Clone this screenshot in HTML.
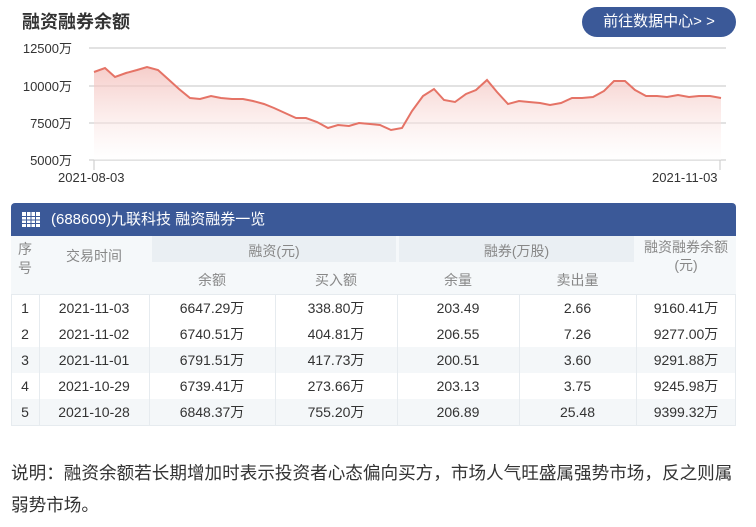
<!DOCTYPE html>
<html><head><meta charset="utf-8"><style>
*{margin:0;padding:0;box-sizing:border-box}
body{width:756px;height:527px;background:#fff;font-family:"Liberation Sans","Noto Sans CJK SC",sans-serif;position:relative;overflow:hidden;color:#333}
.a{position:absolute}
.h1{left:22px;top:8px;font-size:18px;font-weight:bold;color:#333}
.btn{left:582px;top:7px;width:154px;height:30px;border-radius:15px;background:#3b5998;color:#fff;font-size:15px;line-height:30px;text-align:center}
.tb{left:11px;top:203px;width:725px;height:33px;background:#3b5998;border-radius:4px 4px 0 0;color:#fff;font-size:15px;line-height:33px;padding-left:40px}
.c{position:absolute;text-align:center;font-size:13px}
.g{color:#888}
.r{display:flex;height:26px}
.r span{text-align:center}
</style></head><body>
<div class="a h1">融资融券余额</div>
<div class="a btn">前往数据中心&gt; &gt;</div>
<svg class="a" style="left:0;top:0" width="756" height="190">
<defs><linearGradient id="gr" x1="0" y1="0" x2="0" y2="1"><stop offset="0" stop-color="#f2b8b3" stop-opacity=".7"/><stop offset="1" stop-color="#fff" stop-opacity=".4"/></linearGradient></defs>
<g stroke="#d0d0d0" stroke-width="1.2"><line x1="89" y1="48" x2="726" y2="48"/><line x1="89" y1="86" x2="726" y2="86"/><line x1="89" y1="123" x2="726" y2="123"/><line x1="89" y1="160" x2="726" y2="160"/><line x1="94" y1="160" x2="94" y2="170"/><line x1="720" y1="160" x2="720" y2="170"/></g>
<g font-size="13" fill="#333" text-anchor="end" font-family="Liberation Sans,Noto Sans CJK SC,sans-serif"><text x="72" y="53">12500万</text><text x="72" y="91">10000万</text><text x="72" y="128">7500万</text><text x="72" y="165">5000万</text></g>
<g font-size="13" fill="#333" font-family="Liberation Sans,sans-serif"><text x="58" y="182">2021-08-03</text><text x="652" y="182">2021-11-03</text></g>
<path d="M94,72 L105,68 L115,77 L126,73 L137,70 L147,67 L158,70 L168,79 L179,89 L190,98 L200,99 L211,96 L221,98 L232,99 L243,99 L253,101 L264,104 L274,108 L285,113 L296,118 L306,118 L317,122 L328,128 L338,125 L349,126 L359,123 L370,124 L380,125 L391,130 L402,128 L412,111 L423,96 L434,89 L444,100 L455,102 L466,94 L476,90 L487,80 L497,92 L508,104 L519,101 L529,102 L540,103 L550,105 L561,103 L572,98 L582,98 L593,97 L604,91 L614,81 L625,81 L635,90 L646,96 L657,96 L667,97 L678,95 L689,97 L699,96 L710,96 L721,98 L721,160 L94,160Z" fill="url(#gr)"/>
<path d="M94,72 L105,68 L115,77 L126,73 L137,70 L147,67 L158,70 L168,79 L179,89 L190,98 L200,99 L211,96 L221,98 L232,99 L243,99 L253,101 L264,104 L274,108 L285,113 L296,118 L306,118 L317,122 L328,128 L338,125 L349,126 L359,123 L370,124 L380,125 L391,130 L402,128 L412,111 L423,96 L434,89 L444,100 L455,102 L466,94 L476,90 L487,80 L497,92 L508,104 L519,101 L529,102 L540,103 L550,105 L561,103 L572,98 L582,98 L593,97 L604,91 L614,81 L625,81 L635,90 L646,96 L657,96 L667,97 L678,95 L689,97 L699,96 L710,96 L721,98" fill="none" stroke="#e57366" stroke-width="2"/>
</svg>
<div class="a tb">(688609)九联科技 融资融券一览</div>
<svg class="a" style="left:22px;top:212px" width="18" height="15"><rect x="0" y="0" width="18" height="15" fill="#fff"/><g fill="#3b5998"><rect x="0" y="4" width="18" height="1"/><rect x="0" y="7.5" width="18" height="1"/><rect x="0" y="11" width="18" height="1"/><rect x="4" y="0" width="1" height="15"/><rect x="8.5" y="0" width="1" height="15"/><rect x="13" y="0" width="1" height="15"/></g></svg>
<div class="a" style="left:11px;top:236px;width:725px;height:58px;background:#f5f8fa"></div>
<div class="a" style="left:152px;top:236px;width:244px;height:26px;background:#eaeff3"></div>
<div class="a" style="left:399px;top:236px;width:235px;height:26px;background:#eaeff3"></div>
<div class="a" style="left:11px;top:347px;width:725px;height:26px;background:#f4f7f9"></div>
<div class="a" style="left:11px;top:399px;width:725px;height:26px;background:#f4f7f9"></div>
<div class="a" style="left:11px;top:294px;width:725px;height:132px;border:1px solid #e6ebef"></div>
<div class="a" style="left:39px;top:295px;width:1px;height:131px;background:#e6ebef"></div>
<div class="a" style="left:149px;top:295px;width:1px;height:131px;background:#e6ebef"></div>
<div class="a" style="left:275px;top:295px;width:1px;height:131px;background:#e6ebef"></div>
<div class="a" style="left:397px;top:295px;width:1px;height:131px;background:#e6ebef"></div>
<div class="a" style="left:519px;top:295px;width:1px;height:131px;background:#e6ebef"></div>
<div class="a" style="left:636px;top:295px;width:1px;height:131px;background:#e6ebef"></div>
<div class="c g" style="left:11px;top:240px;width:28px;line-height:19px;font-size:14px">序<br>号</div>
<div class="c g" style="left:39px;top:246px;width:110px;font-size:14px">交易时间</div>
<div class="c g" style="left:152px;top:241px;width:244px;font-size:14px">融资(元)</div>
<div class="c g" style="left:399px;top:241px;width:235px;font-size:14px">融券(万股)</div>
<div class="c g" style="left:636px;top:238px;width:100px;line-height:18px;font-size:14px">融资融券余额<br>(元)</div>
<div class="c g" style="left:149px;top:270px;width:126px;font-size:14px">余额</div>
<div class="c g" style="left:275px;top:270px;width:122px;font-size:14px">买入额</div>
<div class="c g" style="left:397px;top:270px;width:122px;font-size:14px">余量</div>
<div class="c g" style="left:519px;top:270px;width:117px;font-size:14px">卖出量</div>
<div class="a" style="left:11px;top:295px;width:725px;font-size:14px;line-height:26px">
<div class="r"><span style="width:28px">1</span><span style="width:110px">2021-11-03</span><span style="width:126px">6647.29万</span><span style="width:122px">338.80万</span><span style="width:122px">203.49</span><span style="width:117px">2.66</span><span style="width:100px">9160.41万</span></div>
<div class="r"><span style="width:28px">2</span><span style="width:110px">2021-11-02</span><span style="width:126px">6740.51万</span><span style="width:122px">404.81万</span><span style="width:122px">206.55</span><span style="width:117px">7.26</span><span style="width:100px">9277.00万</span></div>
<div class="r"><span style="width:28px">3</span><span style="width:110px">2021-11-01</span><span style="width:126px">6791.51万</span><span style="width:122px">417.73万</span><span style="width:122px">200.51</span><span style="width:117px">3.60</span><span style="width:100px">9291.88万</span></div>
<div class="r"><span style="width:28px">4</span><span style="width:110px">2021-10-29</span><span style="width:126px">6739.41万</span><span style="width:122px">273.66万</span><span style="width:122px">203.13</span><span style="width:117px">3.75</span><span style="width:100px">9245.98万</span></div>
<div class="r"><span style="width:28px">5</span><span style="width:110px">2021-10-28</span><span style="width:126px">6848.37万</span><span style="width:122px">755.20万</span><span style="width:122px">206.89</span><span style="width:117px">25.48</span><span style="width:100px">9399.32万</span></div>
</div>
<div class="a" style="left:11px;top:457px;width:728px;font-size:17.6px;line-height:32px;color:#333">说明：融资余额若长期增加时表示投资者心态偏向买方，市场人气旺盛属强势市场，反之则属弱势市场。</div>
</body></html>
